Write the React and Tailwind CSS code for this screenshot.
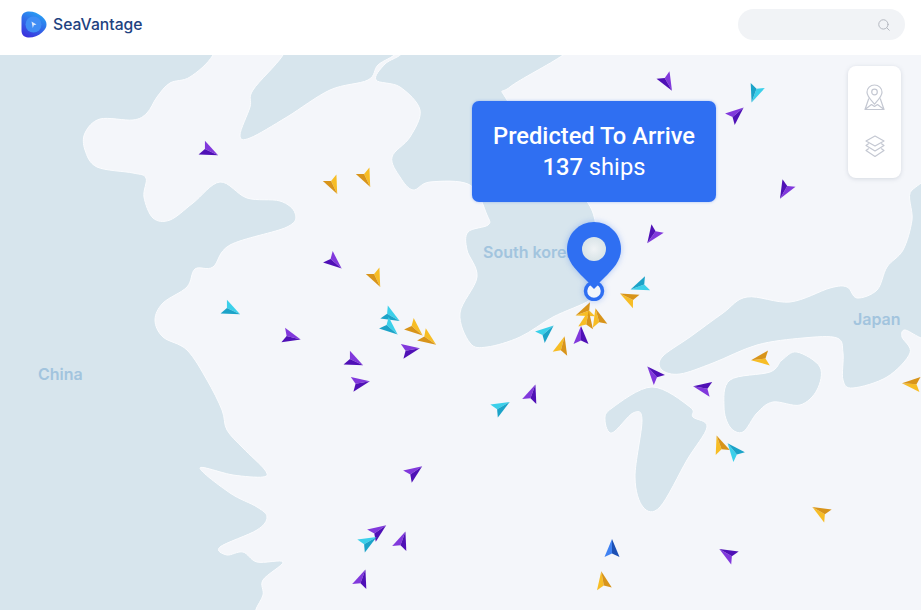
import { Search } from 'lucide-react';

// Turns a list of map points into a closed smooth outline
const smooth = (pts) => {
  let d = `M${pts[0][0]} ${pts[0][1]}`;
  const n = pts.length;
  for (let i = 0; i < n; i++) {
    const p0 = pts[(i - 1 + n) % n];
    const p1 = pts[i];
    const p2 = pts[(i + 1) % n];
    const p3 = pts[(i + 2) % n];
    const c1x = p1[0] + (p2[0] - p0[0]) / 6;
    const c1y = p1[1] + (p2[1] - p0[1]) / 6;
    const c2x = p2[0] - (p3[0] - p1[0]) / 6;
    const c2y = p2[1] - (p3[1] - p1[1]) / 6;
    d += `C${c1x.toFixed(1)} ${c1y.toFixed(1)} ${c2x.toFixed(1)} ${c2y.toFixed(1)} ${p2[0]} ${p2[1]}`;
  }
  return d + 'Z';
};

const WATER = [
  // west
  [[-30, 20], [225, 20], [213, 55], [190, 77], [170, 83], [157, 97], [147, 113], [133, 120], [100, 119], [85, 133], [85, 150], [97, 167], [133, 173], [146, 178], [144, 197], [153, 218], [170, 220], [193, 203], [220, 182], [247, 198], [280, 201], [295, 213], [287, 227], [230, 245], [213, 267], [195, 269], [187, 287], [163, 303], [155, 320], [163, 337], [187, 350], [207, 380], [222, 410], [227, 430], [243, 448], [265, 470], [263, 477], [233, 475], [200, 468], [230, 493], [257, 507], [267, 517], [257, 530], [220, 547], [227, 555], [243, 552], [257, 562], [283, 562], [263, 580], [263, 595], [255, 612], [250, 640], [-30, 640]],
  // north bay
  [[290, 30], [283, 55], [253, 90], [250, 107], [240, 135], [250, 138], [287, 117], [330, 90], [368, 80], [378, 65], [397, 52], [400, 30]],
  // yellow sea side
  [[405, 30], [403, 52], [385, 64], [376, 80], [400, 87], [420, 110], [410, 137], [392, 157], [400, 177], [413, 190], [430, 182], [470, 185], [487, 215], [488, 225], [468, 232], [467, 250], [477, 277], [460, 313], [470, 343], [487, 347], [520, 337], [553, 317], [590, 300], [598, 285], [600, 250], [596, 225], [588, 203], [560, 170], [507, 100], [510, 87], [563, 55], [590, 30]],
  // japan
  [[912, 190], [912, 220], [903, 250], [887, 267], [877, 290], [857, 298], [847, 287], [830, 288], [790, 302], [747, 297], [723, 313], [690, 337], [662, 357], [662, 370], [680, 374], [713, 363], [757, 345], [803, 338], [837, 338], [843, 353], [843, 380], [853, 388], [887, 377], [910, 353], [902, 337], [905, 330], [921, 338], [950, 350], [950, 190]],
  // islands
  [[797, 352], [820, 367], [817, 390], [800, 405], [773, 402], [757, 413], [743, 432], [730, 427], [724, 407], [730, 380], [770, 372], [782, 360]],
  [[652, 387], [690, 407], [693, 417], [707, 427], [687, 460], [660, 507], [643, 507], [635, 477], [642, 420], [633, 413], [612, 433], [605, 420], [612, 408]],
];

const TONES = {
  purple: ['#8138dc', '#4f10b6'],
  cyan: ['#3bd0ea', '#1ba3c8'],
  yellow: ['#f7bd25', '#d8941a'],
  blue: ['#3f82f2', '#1c50b4'],
};

const SHIPS = [
  [209, 151, 'purple', 115], [333, 185, 'yellow', 155], [366, 178, 'yellow', 155], [667, 82, 'purple', 150],
  [755, 93, 'cyan', 200], [736, 114, 'purple', 50], [785, 190, 'purple', 210], [653, 235, 'purple', 215],
  [376, 278, 'yellow', 155], [334, 262, 'purple', 130], [231, 310, 'cyan', 115], [291, 337, 'purple', 104],
  [391, 316, 'cyan', 120], [390, 328, 'cyan', 130], [415, 329, 'yellow', 130], [428, 339, 'yellow', 125],
  [410, 350, 'purple', 80], [354, 361, 'purple', 115], [360, 383, 'purple', 80], [640, 286, 'cyan', 250],
  [629, 298, 'yellow', 296], [585, 312, 'yellow', 250], [587, 320, 'yellow', 10], [598, 318, 'yellow', 345],
  [581, 336, 'purple', 0], [562, 346, 'yellow', 15], [546, 332, 'cyan', 50], [532, 394, 'purple', 20],
  [501, 407, 'cyan', 60], [654, 374, 'purple', 318], [703, 388, 'purple', 280], [761, 359, 'yellow', 263],
  [912, 384, 'yellow', 274], [720, 445, 'yellow', 340], [734, 451, 'cyan', 320], [821, 512, 'yellow', 300],
  [414, 472, 'purple', 55], [378, 531, 'purple', 55], [368, 542, 'cyan', 60], [402, 541, 'purple', 20],
  [362, 579, 'purple', 20], [612, 549, 'blue', 0], [603, 581, 'yellow', 350], [728, 554, 'purple', 300],
];

const Ship = ({ x, y, tone, angle }) => (
  <g transform={`translate(${x} ${y}) rotate(${angle})`}>
    <path d="M0 -10L-7.5 8L0 4.5Z" fill={TONES[tone][0]} />
    <path d="M0 -10L7.5 8L0 4.5Z" fill={TONES[tone][1]} />
  </g>
);

const Logo = () => (
  <svg width="26" height="27" viewBox="0 0 26 27">
    <defs>
      <linearGradient id="logoFill" x1="0.7" y1="0" x2="0.2" y2="1">
        <stop offset="0" stopColor="#27a4f5" />
        <stop offset="1" stopColor="#3b2fdc" />
      </linearGradient>
    </defs>
    <path d="M7 .5C12 .2 17 2 21 5.500C24.500 8.500 25.500 11 25.500 13.500C25.500 16 24.500 18.500 21 21.500C17 25 12 26.800 7 26.500C3 26.200 .5 23.500 .5 19.500V7.500C.5 3.500 3 .8 7 .5Z" fill="url(#logoFill)" />
    <circle cx="12.500" cy="13.500" r="8" fill="#3f8df5" />
    <path d="M10.500 10.500L15.500 13.500L12.800 14.300L11.800 17Z" fill="#dbe9fd" />
  </svg>
);

const PinMapIcon = () => (
  <svg width="21" height="27" viewBox="0 0 21 27" fill="none" stroke="#c4c8d2" strokeWidth="1.200" strokeLinejoin="round">
    <path d="M10.500 1C6.200 1 3 4.200 3 8.200C3 12.500 7.500 16.500 10.500 20C13.500 16.500 18 12.500 18 8.200C18 4.200 14.800 1 10.500 1Z" />
    <circle cx="10.500" cy="8" r="2.800" />
    <path d="M4.800 14.500L1 25.500H20L16.200 14.500M1 25.500L7.500 20.500L10.500 22.500L13.500 20.500L20 25.500" />
  </svg>
);

const LayersIcon = () => (
  <svg width="20" height="23" viewBox="0 0 20 23" fill="none" stroke="#c4c8d2" strokeWidth="1.200" strokeLinejoin="round">
    <path d="M10 1L19 6L10 11L1 6Z" />
    <path d="M3.800 8.500L1 10.500L10 16L19 10.500L16.200 8.500" />
    <path d="M3.800 13.500L1 15.500L10 21.500L19 15.500L16.200 13.500" />
  </svg>
);

const MapPin = () => (
  <svg width="64" height="84" viewBox="0 0 64 84" className="drop-shadow-[0_0_3px_rgba(47,111,242,0.35)]">
    <defs>
      <radialGradient id="pinHole">
        <stop offset="0" stopColor="#f0f3f5" />
        <stop offset="1" stopColor="#d9e4e8" />
      </radialGradient>
    </defs>
    <path d="M32 5C17 5 5 17 5 32C5 44 13 52 22 61L32 71L42 61C51 52 59 44 59 32C59 17 47 5 32 5Z" fill="#2f6ff2" />
    <circle cx="32" cy="32" r="12" fill="url(#pinHole)" />
    <circle cx="32" cy="74" r="8.500" fill="#f4f6fb" stroke="#2f6ff2" strokeWidth="3.500" />
    <path d="M27 67L32 72L37 67Z" fill="#2f6ff2" />
  </svg>
);

export default function App() {
  return (
    <div className="flex h-[610px] w-[921px] flex-col overflow-hidden bg-white font-['Inter',sans-serif]">
      {/* Header */}
      <header className="flex h-[55px] shrink-0 items-center justify-between pb-[6px] pl-[21px] pr-4">
        <div className="flex items-center gap-[6px]">
          <Logo />
          <span className="text-[15.7px] font-medium text-[#21427f]">SeaVantage</span>
        </div>
        <div className="flex h-[31px] w-[167px] items-center justify-end rounded-full bg-[#f1f3f6] pr-[14px]">
          <Search size={14} strokeWidth={1.7} className="text-[#b3b7bf]" />
        </div>
      </header>

      {/* Map */}
      <main className="relative flex-1 overflow-hidden bg-[#f4f6fa]">
        <svg className="absolute inset-0" width="921" height="555" viewBox="0 55 921 555">
          {WATER.map((pts, i) => (
            <path key={i} d={smooth(pts)} fill="#d7e5ed" stroke="#fbfcfe" strokeWidth="1" />
          ))}
          {SHIPS.map(([x, y, tone, angle], i) => (
            <Ship key={i} x={x} y={y} tone={tone} angle={angle} />
          ))}
        </svg>

        <span className="absolute left-[38px] top-[309px] text-[16px] font-semibold leading-5 text-[#a2c4de]">China</span>
        <span className="absolute left-[483px] top-[187px] text-[16px] font-semibold leading-5 text-[#a2c4de]">South korea</span>
        <span className="absolute left-[853px] top-[254px] text-[16px] font-semibold leading-5 text-[#a2c4de]">Japan</span>

        <div className="absolute left-[562px] top-[162px]">
          <MapPin />
        </div>

        {/* Popup */}
        <div className="absolute left-[472px] top-[46px] flex h-[101px] w-[244px] flex-col items-center justify-center rounded-[7px] bg-[#2f6ff2] font-['Roboto',sans-serif] text-[23.7px] leading-[31px] text-white shadow-[0_0_3px_rgba(47,111,242,0.4)]">
          <div className="font-medium">Predicted To Arrive</div>
          <div>
            <span className="font-medium">137</span> ships
          </div>
        </div>

        {/* Map tools */}
        <div className="absolute left-[848px] top-[11px] flex h-[112px] w-[53px] flex-col items-center gap-[24px] rounded-lg bg-white pt-[18px] shadow-[0_1px_4px_rgba(120,130,150,0.25)]">
          <PinMapIcon />
          <LayersIcon />
        </div>
      </main>
    </div>
  );
}
